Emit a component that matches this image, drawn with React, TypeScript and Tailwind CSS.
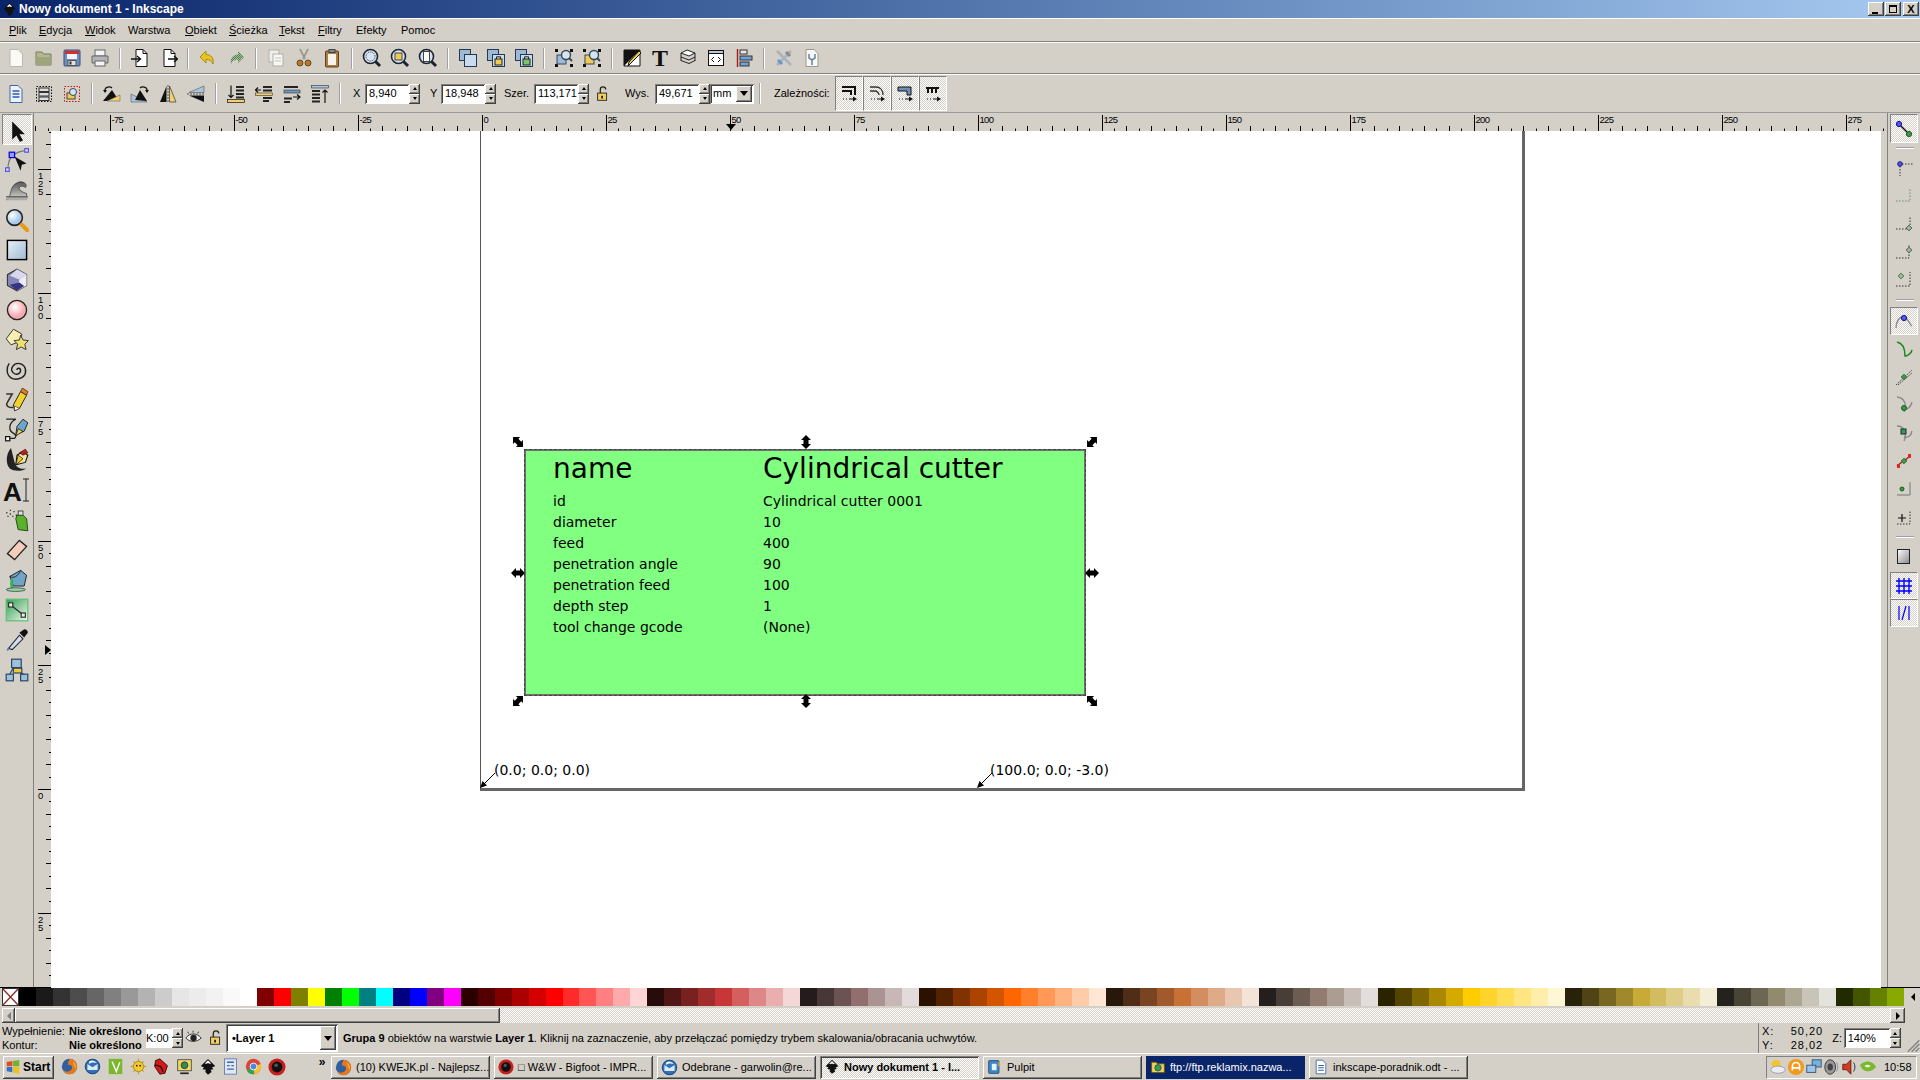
import React from 'react'

const raised = 'shadow-[inset_-1px_-1px_0_#404040,inset_1px_1px_0_#ffffff,inset_-2px_-2px_0_#808080]'
const sunken = 'shadow-[inset_1px_1px_0_#808080,inset_-1px_-1px_0_#ffffff,inset_2px_2px_0_#404040]'
const dither = 'bg-[repeating-conic-gradient(#d4d0c8_0_25%,#ffffff_0_50%)] bg-[length:2px_2px]'

function Ico({ s = 20, children }: { s?: number; children: React.ReactNode }) {
  return <svg width={s} height={s} viewBox="0 0 20 20" className="block shrink-0">{children}</svg>
}

function Mag({ children }: { children?: React.ReactNode }) {
  return (
    <Ico>
      <circle cx="8.5" cy="8.5" r="7" fill="#d5e4f2" stroke="#1c2430" strokeWidth="1.6" />
      {children}
      <path d="M13.5 13.5l4.5 4.5" stroke="#1c2430" strokeWidth="3" />
    </Ico>
  )
}

function Corners({ fill }: { fill: string }) {
  return (
    <Ico>
      <path d="M1 1h3v3H1zM16 1h3v3h-3zM1 16h3v3H1zM16 16h3v3h-3z" fill="#111" />
      <rect x="3" y="7" width="9" height="9" fill={fill} stroke="#36465c" />
      <circle cx="12" cy="7" r="4.5" fill="#d5e4f2" stroke="#36465c" strokeWidth="1.4" />
      <path d="M15 10l3 3" stroke="#36465c" strokeWidth="2" />
    </Ico>
  )
}

function Squares({ lock }: { lock?: string }) {
  return (
    <Ico>
      <rect x="1.5" y="1.5" width="11" height="11" fill="#9db9d6" stroke="#24384f" />
      <rect x="6.5" y="6.5" width="12" height="12" fill="#c9dcef" stroke="#24384f" />
      {lock && <rect x="9" y="11" width="7" height="6" fill={lock} stroke="#222" />}
      {lock && <path d="M10.5 11V8.8h4V11" fill="none" stroke="#222" />}
    </Ico>
  )
}

function Inkscape({ s = 16 }: { s?: number }) {
  return (
    <Ico s={s}>
      <path d="M10 1l8 8-3.5 1.5 1.5 2-3 .5 1 2.5-4 3-3-3 .5-2.5-3.5-.5 1.5-2L2 9z" fill="#111" />
      <path d="M10 2.5l3.5 3.5-2 .5-1.5-1-1.500 1-2-.5z" fill="#f4f4f4" />
    </Ico>
  )
}

function Firefox() {
  return (
    <Ico s={17}>
      <circle cx="10" cy="10" r="9" fill="#2f5f9f" />
      <path d="M10 1a9 9 0 1 1-8.5 12c1 2 4 3.5 7 3 3-.5 5-3 4.500-5.500C12.5 8 10 7.5 8 8c1-2 0-3.500 0-3.500C10 4.500 9.500 2 10 1z" fill="#e8781e" />
      <path d="M14 4a8 8 0 0 1 3 9c-1-3-2-6-3-9z" fill="#f7b733" />
    </Ico>
  )
}

function Thunderbird() {
  return (
    <Ico s={17}>
      <circle cx="10" cy="10" r="9" fill="#2f71b5" />
      <path d="M4 7l6 4 6-4v7H4z" fill="#dbe7f3" />
      <path d="M6 4c3-2 7-1 9 2-3-1-6-1-9 1z" fill="#f0f4f8" />
      <circle cx="10" cy="10" r="8.5" fill="none" stroke="#1b4477" />
    </Ico>
  )
}

function Bigfoot({ s = 16 }: { s?: number }) {
  return (
    <Ico s={s}>
      <circle cx="10" cy="10" r="9.5" fill="#c8201e" />
      <circle cx="10" cy="10" r="6" fill="#111" />
      <circle cx="9" cy="8" r="2" fill="#555" />
    </Ico>
  )
}

const PageOut = ({ inward }: { inward?: boolean }) => (
  <Ico>
    <path d="M6 1.5h7l4 4v13H6z" fill="#fff" stroke="#111" />
    <path d="M13 1.5v4h4" fill="none" stroke="#111" />
    {inward ? <path d="M1 11h9M7 8l3.5 3L7 14" fill="none" stroke="#111" strokeWidth="1.4" /> : <path d="M10 11h9M16 8l3.5 3-3.5 3" fill="none" stroke="#111" strokeWidth="1.4" />}
  </Ico>
)

// main toolbar row, null is a separator
const topIcons: (React.ReactNode | null)[] = [
  <Ico><path d="M4 1.5h8l4.500 4.500v12.500H4z" fill="#fbfbf6" stroke="#b9b9b0" /></Ico>,
  <Ico><path d="M2 4h6l1.5 2h7.500v11H2z" fill="#b3b892" stroke="#767a5a" /><path d="M2 9h15v8H2z" fill="#9fa47d" /></Ico>,
  <Ico><rect x="2" y="2" width="16" height="16" rx="1" fill="#6a8fc0" stroke="#35537e" /><rect x="3" y="3" width="14" height="3" fill="#d92c2c" /><rect x="5" y="6" width="10" height="5" fill="#f4f4f4" /><rect x="6" y="12.5" width="8" height="5" fill="#e2e2e2" stroke="#555" /><rect x="7.5" y="13.5" width="2" height="3" fill="#333" /></Ico>,
  <Ico><rect x="5" y="2" width="10" height="6" fill="#f4f4f4" stroke="#666" /><path d="M2 8h16v7H2z" fill="#b5b5b5" stroke="#666" /><rect x="5" y="13" width="10" height="5" fill="#f4f4f4" stroke="#666" /></Ico>,
  null,
  <PageOut inward />,
  <PageOut />,
  null,
  <Ico><path d="M8 3L2 9l6 6v-3.500c3 0 5.500 1 7 4.500 1-6-2-9.500-7-9.500z" fill="#e8c420" stroke="#a98b12" /></Ico>,
  <Ico><defs><pattern id="rd" width="2" height="2" patternUnits="userSpaceOnUse"><rect width="1" height="1" fill="#4d8048" /><rect x="1" y="1" width="1" height="1" fill="#4d8048" /><rect x="1" width="1" height="1" fill="#a8c0a0" /><rect y="1" width="1" height="1" fill="#a8c0a0" /></pattern></defs><path d="M12 3l6 6-6 6v-3.500c-3 0-5.500 1-7 4.500-1-6 2-9.500 7-9.500z" fill="url(#rd)" /></Ico>,
  null,
  <Ico><rect x="3" y="2" width="10" height="12" fill="#eee" stroke="#b0b0a8" /><rect x="7" y="6" width="10" height="12" fill="#f6f6f2" stroke="#b0b0a8" /><path d="M9 10h6M9 13h6" stroke="#c4c4bc" /></Ico>,
  <Ico><path d="M6 1l5 10M14 1L9 11" stroke="#9a9a92" strokeWidth="1.8" /><circle cx="6" cy="15" r="3" fill="#b9772f" stroke="#6c4a20" /><circle cx="14" cy="15" r="3" fill="#b9772f" stroke="#6c4a20" /></Ico>,
  <Ico><rect x="3.5" y="3" width="13" height="16" rx="1" fill="#b07b3f" stroke="#5c3f1e" /><rect x="6" y="6" width="8" height="11" fill="#f6f4ea" /><rect x="7" y="1.5" width="6" height="3" fill="#888" stroke="#444" /></Ico>,
  null,
  <Mag><circle cx="8.5" cy="8.5" r="4.5" fill="none" stroke="#333" strokeDasharray="1 1" /></Mag>,
  <Mag><rect x="5" y="5" width="7" height="7" fill="#f0c85a" stroke="#444" /></Mag>,
  <Mag><rect x="5.5" y="3.5" width="6" height="10" fill="#fff" stroke="#444" /></Mag>,
  null,
  <Squares />,
  <Squares lock="#f1cb4f" />,
  <Squares lock="#7cc36c" />,
  null,
  <Corners fill="#9db9d6" />,
  <Corners fill="#f1cb4f" />,
  null,
  <Ico><path d="M2 2h16v16H2z" fill="#fff" stroke="#111" /><path d="M2 18V2h16z" fill="#111" /><path d="M6 18l1-4L17 3l2 2L8 16z" fill="#f0cf58" stroke="#111" /></Ico>,
  <span className="font-['Liberation_Serif',serif] font-bold text-[24px] leading-none text-[#111]">T</span>,
  <Ico><path d="M3 5l6-3 8 3-6 3z" fill="#fff" stroke="#222" /><path d="M3 9l8 3 6-3M3 12.5l8 3 6-3" fill="none" stroke="#222" /><path d="M3 5v8M17 5v8" stroke="#222" /></Ico>,
  <Ico><rect x="2.5" y="2.5" width="15" height="15" fill="#fff" stroke="#111" /><rect x="2.5" y="2.5" width="15" height="3" fill="#b9c8dc" stroke="#111" /><path d="M8 9l-2.500 2.500L8 14M12 9l2.500 2.500L12 14" fill="none" stroke="#111" /></Ico>,
  <Ico><path d="M3.5 1v18" stroke="#b01818" strokeWidth="1.4" /><rect x="6" y="2" width="7" height="4" fill="#e8e8e0" stroke="#333" /><rect x="6" y="8" width="12" height="4" fill="#6fa3d8" stroke="#333" /><rect x="6" y="14" width="9" height="4" fill="#6fa3d8" stroke="#333" /></Ico>,
  null,
  <Ico><path d="M3 3l14 14M17 3L3 17" stroke="#a8b4be" strokeWidth="2.6" /><path d="M12 4l4 4" stroke="#8a8a8a" strokeWidth="3" /><path d="M4 12l4 4" stroke="#6f96c2" strokeWidth="3" /></Ico>,
  <Ico><path d="M4 1.5h8l4 4v13H4z" fill="#f8f8f4" stroke="#9a9a92" /><path d="M7 6v4l3 2 3-2V6M10 12v5" fill="none" stroke="#6b89a8" strokeWidth="1.6" /></Ico>,
]

// selection toolbar icons, grouped the same way
const Lines = ({ children, d = 'M9 3h9M9 7h9M9 11h9M9 15h9' }: { children: React.ReactNode; d?: string }) => (
  <Ico>
    <path d={d} stroke="#222" strokeWidth="2" />
    {children}
  </Ico>
)
const selIcons: (React.ReactNode | null)[] = [
  <Ico><path d="M4 1.5h8l4 4v13H4z" fill="#eef3fa" stroke="#3c66a8" /><path d="M6.5 7h7M6.5 10h7M6.5 13h7" stroke="#2b5cae" strokeWidth="1.4" /></Ico>,
  <Ico><rect x="2.5" y="2.5" width="15" height="15" fill="none" stroke="#111" strokeDasharray="1.5 1.5" /><rect x="5" y="4" width="10" height="3.5" fill="#ddd" stroke="#333" /><rect x="5" y="8.5" width="10" height="3.500" fill="#ddd" stroke="#333" /><rect x="5" y="13" width="10" height="3.500" fill="#ddd" stroke="#333" /></Ico>,
  <Ico><rect x="2.5" y="2.5" width="15" height="15" fill="none" stroke="#c81818" strokeDasharray="1.5 1.5" /><rect x="5" y="9" width="8" height="6" fill="#f1cb4f" stroke="#444" /><circle cx="11" cy="8" r="3.5" fill="#d5e4f2" stroke="#36465c" /></Ico>,
  null,
  <Ico><path d="M10 6l7 11H1z" fill="#111" /><path d="M18 11v6H5z" fill="#f1d070" stroke="#555" strokeWidth="0.5" /><path d="M3 8V6c0-3 5-4 7-2" fill="none" stroke="#111" strokeWidth="1.2" /><path d="M1 6h4l-2 3z" fill="#111" /></Ico>,
  <Ico><path d="M1 10l16 8H1z" fill="#a9c4de" stroke="#444" strokeWidth="0.5" /><path d="M10 6l7 11-12-1z" fill="#111" /><path d="M17 8V6c0-3-5-4-7-2" fill="none" stroke="#111" strokeWidth="1.2" /><path d="M15 6h4l-2 3z" fill="#111" /></Ico>,
  <Ico><path d="M8.5 2v16H2z" fill="#111" /><path d="M11.5 2v16H18z" fill="#f1d070" stroke="#333" strokeWidth="0.7" /><path d="M10 1v18" stroke="#555" strokeDasharray="2 1" /></Ico>,
  <Ico><path d="M18 2v6.500H3z" fill="#a9c4de" stroke="#555" strokeWidth="0.6" /><path d="M18 11.5V18L3 11.500z" fill="#111" /><path d="M1 10h18" stroke="#555" strokeDasharray="2 1" /></Ico>,
  null,
  <Lines d="M10 3h8M10 6.500h8M10 10h8M10 13.500h8"><path d="M5 1.500v12M2.500 11L5 13.500 7.500 11" fill="none" stroke="#111" strokeWidth="1.2" /><rect x="1.500" y="15.500" width="17" height="3" fill="#f1d070" stroke="#111" strokeWidth="0.7" /></Lines>,
  <Lines d="M9 3h9M9 6.500h9M9 14h9M9 17h6"><path d="M7 6H1.500M4 3.500L1.500 6 4 8.500" fill="none" stroke="#111" strokeWidth="1.2" /><rect x="1.500" y="9" width="17" height="2.500" fill="#f1d070" stroke="#333" strokeWidth="0.6" /></Lines>,
  <Lines d="M2 3h14M2 14.500h8M2 18h6"><rect x="2" y="6" width="16" height="3" fill="#6f96c2" stroke="#333" strokeWidth="0.6" /><path d="M11 13h7M15 10.500l3 2.500-3 2.500" fill="none" stroke="#111" strokeWidth="1.2" /></Lines>,
  <Lines d="M2 7h8M2 10.500h8M2 14h8M2 17.500h8"><rect x="1.500" y="1.500" width="17" height="2.500" fill="#a9c4de" stroke="#333" strokeWidth="0.6" /><path d="M15 19V6M12.500 8.500L15 6l2.500 2.500" fill="none" stroke="#111" strokeWidth="1.200" /></Lines>,
  null,
]

const depIcons = [
  <path d="M3 3h13v8M3 7h9v4" fill="none" stroke="#111" strokeWidth="2" />,
  <path d="M3 3h6c4 0 7 3 7 8M3 7h5c2 0 4 2 4 4" fill="none" stroke="#333" strokeWidth="1.300" />,
  <path d="M3 3h13v8h-4V7H3z" fill="#6f8fb6" stroke="#111" />,
  <g fill="#111"><path d="M3 3h13v2H3z" /><path d="M4 5h2v4H4zM8 5h2v4H8zM12 5h2v4h-2z" /></g>,
]

const toolIcons: React.ReactNode[] = [
  <Ico s={24}><path d="M6 3v15l3.500-3.500 3 5.500 2.500-1.500-3-5h4.500z" fill="#111" /></Ico>,
  <Ico s={24}><path d="M2.500 17C2.500 9 7 3 18 2" fill="none" stroke="#777" /><rect x="3.500" y="3.500" width="4.500" height="4.500" fill="#99f" stroke="#00d" /><rect x="16.500" y="0.500" width="3" height="3" fill="#ddf" stroke="#55d" /><rect x="0.500" y="16.500" width="3" height="3" fill="#ddf" stroke="#55d" /><path d="M8 7l10 6-4 1-1 5z" fill="#111" /></Ico>,
  <Ico s={24}><defs><linearGradient id="tw" x1="0" y1="0" x2="0" y2="1"><stop offset="0" stopColor="#555" /><stop offset="1" stopColor="#d8d8d4" /></linearGradient></defs><path d="M1 18c4-1 3-6 5-10 2-4 7-6 10-4 2 1 2 3 1 4-1-1-4-2-5 0s3 4 6 5v5z" fill="url(#tw)" stroke="#333" strokeWidth="0.600" /><path d="M1 15h18v3H1z" fill="url(#tw)" /></Ico>,
  <Ico s={24}><defs><radialGradient id="zm" cx="0.350" cy="0.350"><stop offset="0" stopColor="#fff" /><stop offset="1" stopColor="#a8c8ea" /></radialGradient></defs><circle cx="8" cy="8" r="6.500" fill="url(#zm)" stroke="#222" strokeWidth="1.300" /><path d="M12.500 12.500l1.500 1.500" stroke="#222" strokeWidth="2" /><path d="M14 14l4.500 4.500" stroke="#e99b18" strokeWidth="3.400" strokeLinecap="round" /></Ico>,
  <Ico s={24}><defs><linearGradient id="rc" x1="0" y1="0" x2="1" y2="1"><stop offset="0" stopColor="#eaf0f6" /><stop offset="1" stopColor="#9dbad4" /></linearGradient></defs><rect x="2" y="2" width="16" height="16" fill="url(#rc)" stroke="#000" strokeWidth="1.200" /></Ico>,
  <Ico s={24}><path d="M10 1l8 4.500v9L10 19l-8-4.500v-9z" fill="#8687b8" stroke="#333" strokeWidth="0.900" /><path d="M10 1l8 4.500-6 4-8-3z" fill="#d8d8ec" /><path d="M12 9.500l6-4v9L10 19z" fill="#ececf5" /><path d="M4 14l8-2 4 3-6 4z" fill="#35357f" /></Ico>,
  <Ico s={24}><defs><radialGradient id="cr" cx="0.400" cy="0.350"><stop offset="0" stopColor="#fff" /><stop offset="1" stopColor="#f6a9b0" /></radialGradient></defs><circle cx="10" cy="10" r="8" fill="url(#cr)" stroke="#222" strokeWidth="1.100" /></Ico>,
  <Ico s={24}><path d="M7 1l7 4-1 6-8 3-4-5z" fill="#f8efb4" stroke="#333" strokeWidth="0.800" /><path d="M13 6l2 4 4.500.5-3 3 1 4.500-4-2.200-4 2.200 1-4.500-3-3 4.500-.5z" fill="#f0e070" stroke="#333" strokeWidth="0.800" /></Ico>,
  <Ico s={24}><path d="M10 10c0-2 3-2 3 .5S9 15 6.500 12 7 4.500 11 4.500s7 3.500 6 8-8 6.500-12 4S1 8 3.500 4.500" fill="none" stroke="#222" strokeWidth="1.200" /></Ico>,
  <Ico s={24}><path d="M1 5h5L2 12c-2 3 2 5 5 4" fill="none" stroke="#333" strokeWidth="1.300" /><path d="M7 14L13 3l5 3-6 11-4 2z" fill="#f3d22e" stroke="#222" strokeWidth="0.800" /><path d="M13 3l1.500-3L19 3l-1 3z" fill="#ea7d1a" stroke="#222" strokeWidth="0.600" /><path d="M8 15l4 2-4 2z" fill="#fff" stroke="#222" strokeWidth="0.500" /></Ico>,
  <Ico s={24}><path d="M1 1h8c-6 3-6 9-3 11 3 2 4 3 2 5H3" fill="none" stroke="#222" strokeWidth="1.100" /><rect x="0.500" y="15.500" width="3.500" height="3.500" fill="#fff" stroke="#111" /><path d="M9 14l1-7 5-6 4 3-3 7z" fill="#6aa7c8" stroke="#222" strokeWidth="0.800" /><path d="M9 15l2-6 4 2z" fill="#f0d060" stroke="#222" strokeWidth="0.700" /></Ico>,
  <Ico s={24}><path d="M5 0C0 6 1 14 4 17c3 2 9 3 14 0-5 1-9-1-10-5S6 4 5 0z" fill="#222" /><path d="M9 14l1-8 5-3 4 3-2 6z" fill="#f3e3a0" stroke="#111" strokeWidth="0.900" /><path d="M12 4l5-3 2 3-4 2z" fill="#c31a1a" stroke="#111" strokeWidth="0.500" /><path d="M11 6l4 3-6 5z" fill="#f0cc38" stroke="#111" strokeWidth="0.600" /></Ico>,
  <div className="relative w-[24px] h-[24px]">
    <span className="absolute left-[-2px] top-[1px] font-bold text-[26px] leading-none text-[#111]">A</span>
    <svg width="8" height="24" viewBox="0 0 8 24" className="absolute left-[17px] top-0"><path d="M4 1v22M1 1h6M1 23h6" stroke="#222" /></svg>
  </div>,
  <Ico s={24}><path d="M1 4h1M4 2h1M4 5h1M7 3h1M2 7h1M6 7h1M9 6h1" stroke="#333" strokeWidth="1.200" /><path d="M10 6h5l3 3 1 10-8-1-2-9z" fill="#5bb02c" stroke="#1d4a10" strokeWidth="0.800" /><rect x="11" y="2.500" width="4" height="3.500" fill="#dfdfdf" stroke="#333" strokeWidth="0.700" /></Ico>,
  <Ico s={24}><path d="M2 13L12 2l6 5L8 18z" fill="#f5cdbd" stroke="#222" strokeWidth="1.100" /></Ico>,
  <Ico s={24}><path d="M4 7l9-5 5 4-2 9H7z" fill="#6fa4c8" stroke="#222" strokeWidth="0.800" /><path d="M4 7c3 2 7 0 9-5" fill="none" stroke="#222" strokeWidth="0.800" /><path d="M6 9c-1 4-1 5 0 8" stroke="#36b060" strokeWidth="2.400" fill="none" /><ellipse cx="9" cy="18" rx="8" ry="1.500" fill="#8fd8a4" stroke="#333" strokeWidth="0.600" /></Ico>,
  <Ico s={24}><defs><linearGradient id="gr" x1="0" y1="0" x2="1" y2="1"><stop offset="0" stopColor="#2ea04e" /><stop offset="1" stopColor="#f2f8f2" /></linearGradient></defs><rect x="1" y="1" width="18" height="18" fill="url(#gr)" stroke="#5cc070" /><path d="M5 6l10 8" stroke="#333" strokeWidth="1.200" /><rect x="3" y="4" width="3.500" height="3.500" fill="#eee" stroke="#333" /><rect x="13.500" y="12.500" width="3.500" height="3.500" fill="#eee" stroke="#333" /></Ico>,
  <Ico s={24}><path d="M3 17L12 6l3 3-9 9z" fill="#cfe0ea" stroke="#223" strokeWidth="0.900" /><path d="M12 4l4 4 3-4c0-2-1-3-3-3z" fill="#111" /><path d="M3 16c-2 2-2 3-1 3s2-1 1-3z" fill="#4c86b8" /></Ico>,
  <Ico s={24}><rect x="5.500" y="1" width="8" height="7" fill="#9ec0dc" stroke="#2b4763" /><rect x="7" y="8.500" width="7" height="4" fill="#f0c83a" stroke="#2b4763" /><rect x="1" y="13.500" width="6" height="5.500" fill="#9ec0dc" stroke="#2b4763" /><rect x="13" y="13.500" width="6" height="5.500" fill="#9ec0dc" stroke="#2b4763" /><path d="M7 8L4 13.500M13 12.500l3 1" fill="none" stroke="#2b4763" /></Ico>,
]

const D = ({ x, y, c = '#3c9a40', s = '#1c5a20' }: { x: number; y: number; c?: string; s?: string }) => <rect x={x - 2} y={y - 2} width="4" height="4" fill={c} stroke={s} strokeWidth="0.700" transform={`rotate(45 ${x} ${y})`} />
const dash = { fill: 'none', stroke: '#333', strokeDasharray: '1.500 1.500' }
const green = { fill: 'none', stroke: '#6a8a6a', strokeDasharray: '1.500 1.500' }

const snapA = [
  <Ico><circle cx="6" cy="7" r="2.300" fill="#55f" stroke="#118" /><path d="M6 9v10M8 7h11" {...dash} /></Ico>,
  <Ico><path d="M2 16h14V3" {...green} /></Ico>,
  <Ico><path d="M2 16h14V3" {...dash} /><D x={15} y={15} c="#9fb89f" s="#333" /></Ico>,
  <Ico><path d="M2 17h13V3" {...dash} /><D x={15} y={9} c="#9fb89f" s="#333" /></Ico>,
  <Ico><path d="M2 17h14V3" {...dash} /><D x={7} y={7} c="#9fb89f" s="#1c5a20" /></Ico>,
]
const snapB = [
  <Ico><path d="M2 17C2 10 6 5 10 6s6 8 8 9" fill="none" stroke="#888" strokeWidth="1.300" /><circle cx="10" cy="7" r="2.600" fill="#55f" stroke="#118" /></Ico>,
  <Ico><path d="M3 3c5 1 8 5 8 14 1 0 6-1 7-6" fill="none" stroke="#1a8a1a" strokeWidth="1.500" /></Ico>,
  <Ico><path d="M2 18L18 3M4 18L18 6" stroke="#444" strokeDasharray="1.500 1" /><D x={10} y={10} /></Ico>,
  <Ico><path d="M3 2c8 1 10 8 7 15M18 7c-1 5-4 7-8 8" fill="none" stroke="#888" strokeWidth="1.300" /><circle cx="10" cy="13" r="2.500" fill="#3c9a40" stroke="#1c5a20" /></Ico>,
  <Ico><path d="M3 3c8 0 10 8 7 15M18 8c-1 5-4 7-8 6" fill="none" stroke="#888" strokeWidth="1.300" /><rect x="7" y="6" width="5" height="5" fill="#3c9a40" stroke="#1c2a50" /></Ico>,
  <Ico><path d="M3 15l5-4M10 10l6-5" stroke="#a02020" strokeWidth="1.500" /><D x={10} y={10} /><rect x="3" y="13" width="3" height="4" fill="#e02828" /><rect x="14" y="3" width="3" height="4" fill="#e02828" /></Ico>,
  <Ico><path d="M3 16h13V3" fill="none" stroke="#777" /><circle cx="8" cy="10" r="2" fill="#3c9a40" stroke="#1c5a20" /></Ico>,
  <Ico><path d="M3 17h13V3" {...dash} /><path d="M4 11h8M8 7v8" stroke="#111" strokeWidth="1.200" /></Ico>,
]

function Tool({ children, active }: { children: React.ReactNode; active?: boolean }) {
  return (
    <div className={`w-[30px] flex items-center justify-center ${active ? `h-[31px] border border-[#808080] border-r-white border-b-white ${dither}` : 'h-[30px]'}`}>
      {children}
    </div>
  )
}

function SideBtn({ children, active, h = 'h-[28px]' }: { children: React.ReactNode; active?: boolean; h?: string }) {
  return (
    <div className={`w-[28px] ${h} flex items-center justify-center ${active ? `border border-[#808080] border-r-white border-b-white ${dither}` : ''}`}>
      {children}
    </div>
  )
}

function SideSep({ h }: { h: string }) {
  return (
    <div className={`${h} flex items-center justify-center`}>
      <div className="w-[18px] border-t border-b border-t-[#a0a0a0] border-b-white" />
    </div>
  )
}

function ToolSep() {
  return (
    <div className="w-3 flex justify-center">
      <div className="h-[21px] w-[2px] border-l border-r border-l-[#a0a0a0] border-r-white" />
    </div>
  )
}

function Row({ icons }: { icons: (React.ReactNode | null)[] }) {
  return (
    <>
      {icons.map((ic, i) =>
        ic === null ? <ToolSep key={i} /> : <div key={i} className="w-7 flex justify-center">{ic}</div>
      )}
    </>
  )
}

function Spin() {
  return (
    <div className="w-[11px] h-[20px] flex flex-col shrink-0">
      <div className={`h-[10px] bg-[#d4d0c8] flex items-center justify-center ${raised}`}>
        <div className="border-x-[2px] border-b-[3px] border-x-transparent border-b-black" />
      </div>
      <div className={`h-[10px] bg-[#d4d0c8] flex items-center justify-center ${raised}`}>
        <div className="border-x-[2px] border-t-[3px] border-x-transparent border-t-black" />
      </div>
    </div>
  )
}

function Field({ w, children }: { w: string; children: React.ReactNode }) {
  return (
    <div className={`${w} h-[20px] bg-white pl-[4px] flex items-center overflow-hidden shrink-0 ${sunken}`}>
      {children}
    </div>
  )
}

function DropArrow() {
  return (
    <div className={`h-full w-[16px] flex items-center justify-center bg-[#d4d0c8] ${raised}`}>
      <div className="border-x-[4px] border-t-[5px] border-x-transparent border-t-black" />
    </div>
  )
}

function Handle({ cls, rot }: { cls: string; rot: string }) {
  return (
    <svg width="14" height="14" viewBox="0 0 14 14" className={`absolute ${cls} ${rot}`}>
      <path d="M7 0l5 5H9.500v4H12l-5 5-5-5h2.500V5H2z" fill="#000" />
    </svg>
  )
}

function Arrow({ cls }: { cls: string }) {
  return (
    <svg width="16" height="16" viewBox="0 0 16 16" className={`absolute ${cls}`}>
      <path d="M15 1L3 13" stroke="#000" strokeWidth="1" />
      <path d="M0 16l2.500-7 4.500 4.500z" fill="#000" />
    </svg>
  )
}

function HRuler() {
  const x0 = 447.6
  const step = 12.4
  const ticks = []
  for (let i = -36; i < 114; i++) {
    const x = x0 + i * step
    if (x < 0 || x > 1853) continue
    const y1 = i % 10 === 0 ? 2 : i % 2 === 0 ? 13 : 15.5
    ticks.push(<line key={i} x1={Math.round(x) + 0.5} x2={Math.round(x) + 0.5} y1={y1} y2="18" stroke="#000" />)
    if (i % 10 === 0) {
      ticks.push(<text key={`t${i}`} x={Math.round(x) + 1.5} y="9.5" fontSize="9.5" letterSpacing="-0.700" fontFamily="Liberation Sans, sans-serif" fill="#000">{i * 2.5}</text>)
    }
  }
  return (
    <svg width="1853" height="18" className="block">
      {ticks}
      <path d="M692 11h10l-5 6z" fill="#000" />
    </svg>
  )
}

function VRuler() {
  const y0 = 658
  const step = 12.4
  const ticks = []
  for (let i = -53; i < 20; i++) {
    const y = y0 + i * step
    if (y < 0 || y > 857) continue
    const x1 = i % 10 === 0 ? 4 : i % 2 === 0 ? 12 : 15
    ticks.push(<line key={i} y1={Math.round(y) + 0.5} y2={Math.round(y) + 0.5} x1={x1} x2="17" stroke="#000" />)
    if (i % 10 === 0) {
      const label = String(Math.abs(i * 2.5))
      label.split('').forEach((c, k) => {
        ticks.push(<text key={`t${i}${k}`} x="4" y={Math.round(y) + 10 + k * 8} fontSize="9.5" fontFamily="Liberation Sans, sans-serif" fill="#000">{c}</text>)
      })
    }
  }
  return (
    <svg width="17" height="857" className="block shrink-0">
      {ticks}
      <path d="M11 514v10l6-5z" fill="#000" />
    </svg>
  )
}

const palette = ['#000000', '#1a1a1a', '#333333', '#4d4d4d', '#666666', '#808080', '#999999', '#b3b3b3', '#cccccc', '#e6e6e6', '#ececec', '#f2f2f2', '#f9f9f9', '#ffffff', '#800000', '#ff0000', '#808000', '#ffff00', '#008000', '#00ff00', '#008080', '#00ffff', '#000080', '#0000ff', '#800080', '#ff00ff', '#2b0000', '#550000', '#800000', '#aa0000', '#d40000', '#ff0000', '#ff2a2a', '#ff5555', '#ff8080', '#ffaaaa', '#ffd5d5', '#280b0b', '#501616', '#782121', '#a02c2c', '#c83737', '#d35f5f', '#de8787', '#e9afaf', '#f4d7d7', '#241c1c', '#483737', '#6c5353', '#916f6f', '#ac9393', '#c8b7b7', '#e3dbdb', '#2b1100', '#552200', '#803300', '#aa4400', '#d45500', '#ff6600', '#ff7f2a', '#ff9955', '#ffb380', '#ffccaa', '#ffe6d5', '#28170b', '#502d16', '#784421', '#a05a2c', '#c87137', '#d38d5f', '#deaa87', '#e9c6af', '#f4e3d7', '#241f1c', '#483e37', '#6c5d53', '#917c6f', '#ac9d93', '#c8beb7', '#e3dedb', '#2b2200', '#554400', '#806600', '#aa8800', '#d4aa00', '#ffcc00', '#ffd42a', '#ffdd55', '#ffe680', '#ffeeaa', '#fff6d5', '#28220b', '#504416', '#786721', '#a0892c', '#c8ab37', '#d3bc5f', '#decd87', '#e9ddaf', '#f4eed7', '#24221c', '#484537', '#6c6753', '#918a6f', '#aca793', '#c8c4b7', '#e3e2db', '#222b00', '#445500', '#668000', '#88aa00']

const menu = [
  { t: 'Plik', w: 'w-[30px]', u: 'P', r: 'lik' },
  { t: 'Edycja', w: 'w-[46px]', u: 'E', r: 'dycja' },
  { t: 'Widok', w: 'w-[43px]', u: 'W', r: 'idok' },
  { t: 'Warstwa', w: 'w-[57px]', u: '', r: 'Warstwa' },
  { t: 'Obiekt', w: 'w-[44px]', u: 'O', r: 'biekt' },
  { t: 'Ścieżka', w: 'w-[50px]', u: 'Ś', r: 'cieżka' },
  { t: 'Tekst', w: 'w-[39px]', u: 'T', r: 'ekst' },
  { t: 'Filtry', w: 'w-[38px]', u: 'F', r: 'iltry' },
  { t: 'Efekty', w: 'w-[45px]', u: '', r: 'Efekty' },
  { t: 'Pomoc', w: 'w-[45px]', u: '', r: 'Pomoc' },
]

const rows = [
  ['id', 'Cylindrical cutter 0001'],
  ['diameter', '10'],
  ['feed', '400'],
  ['penetration angle', '90'],
  ['penetration feed', '100'],
  ['depth step', '1'],
  ['tool change gcode', '(None)'],
]

const quick = [
  <Firefox />,
  <Thunderbird />,
  <Ico s={17}><rect x="2" y="1" width="16" height="18" fill="#7ab82e" /><path d="M6 4l5 12 4-11" fill="none" stroke="#fff" strokeWidth="1.600" /></Ico>,
  <Ico s={17}><circle cx="10" cy="10" r="6" fill="#f0cc30" stroke="#a08010" /><path d="M10 1v3M10 16v3M1 10h3M16 10h3M4 4l2 2M14 14l2 2M16 4l-2 2M6 14l-2 2" stroke="#c8a020" strokeWidth="1.500" /><circle cx="8" cy="9" r="1" fill="#222" /><circle cx="12" cy="9" r="1" fill="#222" /></Ico>,
  <Ico s={17}><path d="M3 3l5-2 9 8-3 9-6 1-6-9z" fill="#d81818" stroke="#220808" /><path d="M2 8l7 2 3 6" fill="none" stroke="#111" strokeWidth="1.500" /></Ico>,
  <Ico s={17}><rect x="2" y="2" width="16" height="13" fill="#efd860" stroke="#444" /><circle cx="10" cy="8.500" r="4" fill="#3c8a3c" stroke="#1c3a6a" /><path d="M5 18h10" stroke="#222" strokeWidth="2" /></Ico>,
  <Inkscape s={18} />,
  <Ico s={17}><rect x="3" y="1" width="14" height="18" fill="#e0e8f4" stroke="#5878a8" /><path d="M6 5h8M6 9h3M11 9h3M6 13h8" stroke="#3c66a8" strokeWidth="1.500" /></Ico>,
  <Ico s={17}><circle cx="10" cy="10" r="9" fill="#dc4437" /><path d="M10 10L2 14.500a9 9 0 0 0 9 4.500z" fill="#2da44e" /><path d="M10 10l8.500-3A9 9 0 0 1 11 19z" fill="#f6c22d" /><circle cx="10" cy="10" r="4" fill="#4a86e8" stroke="#fff" /></Ico>,
  <Bigfoot s={18} />,
]

function TaskBtn({ icon, children, cls = '' }: { icon: React.ReactNode; children: React.ReactNode; cls?: string }) {
  return (
    <div className={`w-[159px] h-[23px] shrink-0 flex items-center gap-[4px] pl-[4px] overflow-hidden whitespace-nowrap ${cls || `bg-[#d4d0c8] ${raised}`}`}>
      {icon}
      {children}
    </div>
  )
}

export default function App() {
  return (
    <div className="w-[1920px] h-[1080px] overflow-hidden flex flex-col bg-[#d4d0c8] text-black text-[11px] leading-none font-['Liberation_Sans',sans-serif]">
      {/* title bar */}
      <div className="h-[18px] shrink-0 flex items-center bg-gradient-to-r from-[#0a246a] to-[#a6caf0]">
        <div className="w-[19px] flex justify-center"><Inkscape s={15} /></div>
        <span className="text-white font-bold text-[12px]">Nowy dokument 1 - Inkscape</span>
        <div className="ml-auto flex mr-[1px] gap-[1px]">
          <div className={`w-[16px] h-[14px] bg-[#d4d0c8] flex items-end pl-[4px] pb-[2px] ${raised}`}><div className="w-[6px] h-[2px] bg-black" /></div>
          <div className={`w-[16px] h-[14px] bg-[#d4d0c8] flex items-center justify-center ${raised}`}><div className="w-[8px] h-[8px] border border-black border-t-2" /></div>
          <div className={`w-[16px] h-[14px] bg-[#d4d0c8] flex items-center justify-center text-[11px] font-bold ml-[1px] ${raised}`}>X</div>
        </div>
      </div>

      {/* menu */}
      <div className="h-[24px] shrink-0 flex items-center pl-[9px] border-t border-t-white border-b border-b-[#808080]">
        {menu.map(m => (
          <div key={m.t} className={m.w}>
            {m.u && <span className="underline">{m.u}</span>}{m.r}
          </div>
        ))}
      </div>

      {/* commands toolbar */}
      <div className="h-[32px] shrink-0 flex items-center pl-[2px] border-t border-t-white border-b border-b-[#808080]">
        <Row icons={topIcons} />
      </div>

      {/* selector toolbar */}
      <div className="h-[39px] shrink-0 flex items-center pl-[2px] border-t border-t-white border-b border-b-[#999999]">
        <Row icons={selIcons} />
        <div className="w-[19px] pl-[7px]">X</div>
        <Field w="w-[44px]">8,940</Field>
        <Spin />
        <div className="w-[21px] pl-[10px]">Y</div>
        <Field w="w-[44px]">18,948</Field>
        <Spin />
        <div className="w-[38px] pl-[8px]">Szer.</div>
        <Field w="w-[44px]">113,171</Field>
        <Spin />
        <div className="w-[27px] flex justify-center">
          <Ico s={18}><path d="M7 9V5a3 3 0 0 1 6 0" fill="none" stroke="#222" strokeWidth="1.400" /><rect x="4" y="9" width="10" height="8" fill="#f1d060" stroke="#222" /><rect x="8" y="12" width="2" height="3" fill="#222" /></Ico>
        </div>
        <div className="w-[39px] pl-[9px]">Wys.</div>
        <Field w="w-[44px]">49,671</Field>
        <Spin />
        <div className={`w-[44px] h-[20px] bg-white flex items-center justify-between pl-[3px] pr-[2px] py-[2px] ${sunken}`}>
          mm
          <DropArrow />
        </div>
        <ToolSep />
        <div className="w-[69px] pl-[8px] whitespace-nowrap">Zależności:</div>
        {depIcons.map((d, i) => (
          <div key={i} className={`w-[28px] h-[35px] flex items-center justify-center border border-[#808080] border-r-white border-b-white ${dither}`}>
            <Ico>{d}<path d="M4 15h1M7 15h1M10 15h4" stroke="#111" /><path d="M14 12.500l4 2.500-4 2.500z" fill="#111" /></Ico>
          </div>
        ))}
      </div>

      {/* main */}
      <div className="h-[874px] shrink-0 flex">
        <div className="w-[34px] shrink-0 border-r border-r-[#808080] pt-[1px] pl-[2px]">
          {toolIcons.map((ic, i) => (
            <Tool key={i} active={i === 0}>{ic}</Tool>
          ))}
        </div>

        <div className="flex-1 flex flex-col min-w-0">
          <HRuler />
          <div className="flex flex-1 min-h-0">
            <VRuler />
            <div className="relative w-[1830px] h-[857px] bg-white overflow-hidden font-['DejaVu_Sans',sans-serif] shrink-0">
              {/* page */}
              <div className="absolute left-[429px] -top-px w-[1045px] h-[661px] bg-white border border-[#555555] border-r-[3px] border-b-[3px] border-r-[#666666] border-b-[#666666]" />

              {/* selected group */}
              <div className="absolute left-[473px] top-[318px] w-[562px] h-[247px] bg-[#80ff80] border-2 border-[#6e6e6e] pl-[27px] leading-none">
                <div className="absolute -inset-[2px] border border-dashed border-[#444444]" />
                <div className="grid grid-cols-[210px_1fr] h-[39px] pb-[3px] items-center text-[28px] whitespace-nowrap">
                  <div>name</div>
                  <div>Cylindrical cutter</div>
                </div>
                {rows.map(r => (
                  <div key={r[0]} className="grid grid-cols-[210px_1fr] h-[21px] items-center text-[14px] whitespace-nowrap">
                    <div>{r[0]}</div>
                    <div>{r[1]}</div>
                  </div>
                ))}
              </div>

              <Handle cls="left-[460px] top-[304px]" rot="-rotate-45" />
              <Handle cls="left-[748px] top-[304px]" rot="" />
              <Handle cls="left-[1034px] top-[304px]" rot="rotate-45" />
              <Handle cls="left-[460px] top-[435px]" rot="rotate-90" />
              <Handle cls="left-[1034px] top-[435px]" rot="rotate-90" />
              <Handle cls="left-[460px] top-[563px]" rot="rotate-45" />
              <Handle cls="left-[748px] top-[563px]" rot="" />
              <Handle cls="left-[1034px] top-[563px]" rot="-rotate-45" />

              <Arrow cls="left-[429px] top-[641px]" />
              <span className="absolute left-[443px] top-[632px] text-[14px] whitespace-nowrap">(0.0; 0.0; 0.0)</span>
              <Arrow cls="left-[926px] top-[641px]" />
              <span className="absolute left-[939px] top-[632px] text-[14px] whitespace-nowrap">(100.0; 0.0; -3.0)</span>
            </div>
            <div className="flex-1" />
          </div>
        </div>

        <div className="w-[33px] shrink-0 border-l border-l-[#808080] pt-[1px] pl-[2px]">
          <SideBtn active h="h-[29px]">
            <Ico><circle cx="5" cy="5" r="2.600" fill="#55f" stroke="#118" /><path d="M7 7l6 6" stroke="#111" strokeWidth="1.500" /><circle cx="15" cy="15" r="2.600" fill="#3c9a40" stroke="#1c5a20" /></Ico>
          </SideBtn>
          <SideSep h="h-[10px]" />
          {snapA.map((ic, i) => <SideBtn key={i}>{ic}</SideBtn>)}
          <SideSep h="h-[14px]" />
          <SideBtn active>{snapB[0]}</SideBtn>
          {snapB.slice(1).map((ic, i) => <SideBtn key={i}>{ic}</SideBtn>)}
          <SideSep h="h-[12px]" />
          <SideBtn>
            <Ico><defs><linearGradient id="pg" x1="0" y1="0" x2="1" y2="1"><stop offset="0" stopColor="#fff" /><stop offset="1" stopColor="#888" /></linearGradient></defs><rect x="3.500" y="2.500" width="12" height="14" fill="url(#pg)" stroke="#222" /></Ico>
          </SideBtn>
          <div className="h-px" />
          <SideBtn active h="h-[27px]">
            <Ico><path d="M5 2v16M10 2v16M15 2v16M2 5h16M2 10h16M2 15h16" stroke="#0000ff" strokeWidth="1.400" /></Ico>
          </SideBtn>
          <SideBtn active h="h-[28px]">
            <Ico><path d="M5 3v14M15 3v14M8 17L12 3" stroke="#0000ff" strokeWidth="1.200" /></Ico>
          </SideBtn>
        </div>
      </div>

      {/* palette */}
      <div className="h-[21px] shrink-0 border-t border-t-black flex">
        <div className="w-[19px] h-[18px] pl-[2px]">
          <svg width="17" height="18" viewBox="0 0 17 18" className="block bg-white">
            <rect x="0.500" y="0.500" width="16" height="17" fill="none" stroke="#333" />
            <path d="M1 1l15 16M16 1L1 17" stroke="#8c2a2a" strokeWidth="1.300" />
          </svg>
        </div>
        <div className="flex w-[1886px] h-[18px]">
          {palette.map((c, i) => (
            <div key={i} className="flex-1 h-full" style={{ backgroundColor: c }} />
          ))}
        </div>
        <div className="w-[15px] h-[18px] flex items-center justify-center">
          <div className="border-y-[4px] border-r-[4px] border-y-transparent border-r-black" />
        </div>
      </div>

      {/* horizontal scrollbar */}
      <div className="h-[15px] shrink-0 flex pl-[2px]">
        <div className={`w-[13px] h-full bg-[#d4d0c8] flex items-center justify-center ${raised}`}>
          <div className="border-y-[4px] border-r-[4px] border-y-transparent border-r-[#808080]" />
        </div>
        <div className={`w-[485px] h-full bg-[#d4d0c8] ${raised}`} />
        <div className={`w-[1390px] h-full ${dither}`} />
        <div className={`w-[15px] h-full bg-[#d4d0c8] flex items-center justify-center ${raised}`}>
          <div className="border-y-[4px] border-l-[4px] border-y-transparent border-l-black" />
        </div>
      </div>

      {/* status bar */}
      <div className="h-[30px] shrink-0 flex items-center">
        <div className="w-[147px] pl-[2px] grid grid-cols-[67px_1fr] gap-y-[3px] whitespace-nowrap">
          <div>Wypełnienie:</div>
          <div className="font-bold">Nie określono</div>
          <div>Kontur:</div>
          <div className="font-bold">Nie określono</div>
        </div>
        <div className="w-[26px] h-[19px] bg-white flex items-center overflow-hidden -ml-px">K:00</div>
        <Spin />
        <div className="w-[21px] flex justify-center">
          <Ico s={18}><path d="M1 10c4-6 12-6 17 0-5 5-13 5-17 0z" fill="#eee" stroke="#222" /><circle cx="9.500" cy="10" r="3.500" fill="#222" /><path d="M4 5l-1-2M9 4V2M14 5l1-2" stroke="#222" /></Ico>
        </div>
        <div className="w-[22px] flex justify-center pl-[1px]">
          <Ico s={18}><path d="M7 9V5a3 3 0 0 1 6 0" fill="none" stroke="#222" strokeWidth="1.400" /><rect x="4" y="9" width="10" height="8" fill="#f1d060" stroke="#222" /><rect x="8" y="12" width="2" height="3" fill="#222" /></Ico>
        </div>
        <div className={`w-[112px] h-[28px] bg-white flex items-center justify-between pl-[6px] pr-[2px] py-[2px] font-bold ${sunken}`}>
          •Layer 1
          <DropArrow />
        </div>
        <div className="ml-[5px] whitespace-nowrap">
          <b>Grupa 9</b> obiektów na warstwie <b>Layer 1</b>. Kliknij na zaznaczenie, aby przełączać pomiędzy trybem skalowania/obracania uchwytów.
        </div>
        <div className="ml-auto h-full w-[162px] flex items-center border-l border-l-[#808080] pl-[3px]">
          <div className="w-[64px] grid grid-cols-[auto_1fr] gap-y-[3px] tracking-[1px]">
            <div>X:</div>
            <div className="text-right">50,20</div>
            <div>Y:</div>
            <div className="text-right">28,02</div>
          </div>
          <div className="w-[21px] pl-[9px]">Z:</div>
          <Field w="w-[46px]">140%</Field>
          <Spin />
          <svg width="16" height="16" viewBox="0 0 16 16" className="ml-[4px] self-end">
            <path d="M15 3L3 15M15 7l-8 8M15 11l-4 4" stroke="#808080" strokeWidth="1.400" />
          </svg>
        </div>
      </div>

      {/* windows taskbar */}
      <div className="h-[27px] shrink-0 border-t border-t-white flex items-center gap-[4px] pl-[3px]">
        <div className={`w-[51px] h-[23px] flex items-center gap-[3px] pl-[3px] font-bold text-[12px] bg-[#d4d0c8] ${raised}`}>
          <Ico s={14}><path d="M1 3l8-1.500V9H1z" fill="#e04a28" /><path d="M10 1.500L19 0v9h-9z" fill="#6fb52c" /><path d="M1 10h8v7.500L1 16z" fill="#2f74c8" /><path d="M10 10h9v10l-9-2z" fill="#f0c020" /></Ico>
          Start
        </div>
        <div className="flex w-[230px]">
          {quick.map((q, i) => <div key={i} className="w-[23px] flex justify-center">{q}</div>)}
        </div>
        <div className="w-[35px] text-center font-bold text-[12px] self-start pt-[2px] pl-[25px]">»</div>
        <TaskBtn icon={<Firefox />}>(10) KWEJK.pl - Najlepsz...</TaskBtn>
        <TaskBtn icon={<Bigfoot />}>□ W&amp;W - Bigfoot - IMPR...</TaskBtn>
        <TaskBtn icon={<Thunderbird />}>Odebrane - garwolin@re...</TaskBtn>
        <TaskBtn icon={<Inkscape />} cls={`font-bold ${dither} ${sunken}`}>Nowy dokument 1 - I...</TaskBtn>
        <TaskBtn icon={<Ico s={16}><rect x="2" y="2" width="13" height="16" rx="1" fill="#3c86c8" stroke="#1c4a78" /><path d="M6 6h6v8H6z" fill="#e8f0f8" /><path d="M14 3l3 4-3 3z" fill="#e8a030" /></Ico>}>Pulpit</TaskBtn>
        <TaskBtn icon={<Ico s={16}><path d="M2 4h6l1 2h9v11H2z" fill="#f0d050" stroke="#665010" /><circle cx="10" cy="11" r="4" fill="#3c9a40" stroke="#1c4a8a" /></Ico>} cls="bg-[#0a246a] text-white">ftp://ftp.reklamix.nazwa...</TaskBtn>
        <TaskBtn icon={<Ico s={16}><path d="M4 1.500h8l4 4v13H4z" fill="#fff" stroke="#2f5f9f" /><path d="M6.500 8h7M6.500 11h7M6.500 14h7" stroke="#2f5f9f" strokeWidth="1.300" /></Ico>}>inkscape-poradnik.odt - ...</TaskBtn>
        <div className="ml-auto mr-[3px] w-[151px] h-[23px] border border-[#808080] border-r-white border-b-white flex items-center pl-[2px]">
          <div className="flex w-[112px] justify-between pr-[5px]">
            <Ico s={18}><circle cx="8" cy="7" r="5" fill="#f4c430" /><ellipse cx="10" cy="13" rx="8" ry="4" fill="#e8edf4" stroke="#99a" /></Ico>
            <Ico s={18}><circle cx="10" cy="10" r="9" fill="#f39a1e" /><path d="M6 14V9a4 4 0 0 1 8 0v5M6 11h8" fill="none" stroke="#fff" strokeWidth="1.800" /></Ico>
            <Ico s={18}><rect x="8" y="2" width="10" height="8" fill="#7ab0e8" stroke="#356" /><rect x="2" y="8" width="10" height="8" fill="#9cc4f0" stroke="#356" /></Ico>
            <Ico s={18}><ellipse cx="8" cy="10" rx="6" ry="8" fill="#999" stroke="#333" /><ellipse cx="8" cy="10" rx="3" ry="4" fill="#444" /><path d="M15 5c2 3 2 7 0 10" stroke="#88a" fill="none" /></Ico>
            <Ico s={18}><path d="M2 7h4l5-5v16l-5-5H2z" fill="#d83a1e" stroke="#522" /><path d="M14 5c2 3 2 7 0 10" stroke="#222" fill="none" /></Ico>
            <Ico s={18}><path d="M1 8c4-5 10-5 13-3 2 1 4 3 5 5-4 5-10 6-14 3-2-1-3-3-4-5z" fill="#7ab82e" /><path d="M6 9c2-2 5-2 7 0-2 2-5 2-7 0z" fill="#eaf4d8" /></Ico>
          </div>
          <span className="ml-[3px]">10:58</span>
        </div>
      </div>
    </div>
  )
}
